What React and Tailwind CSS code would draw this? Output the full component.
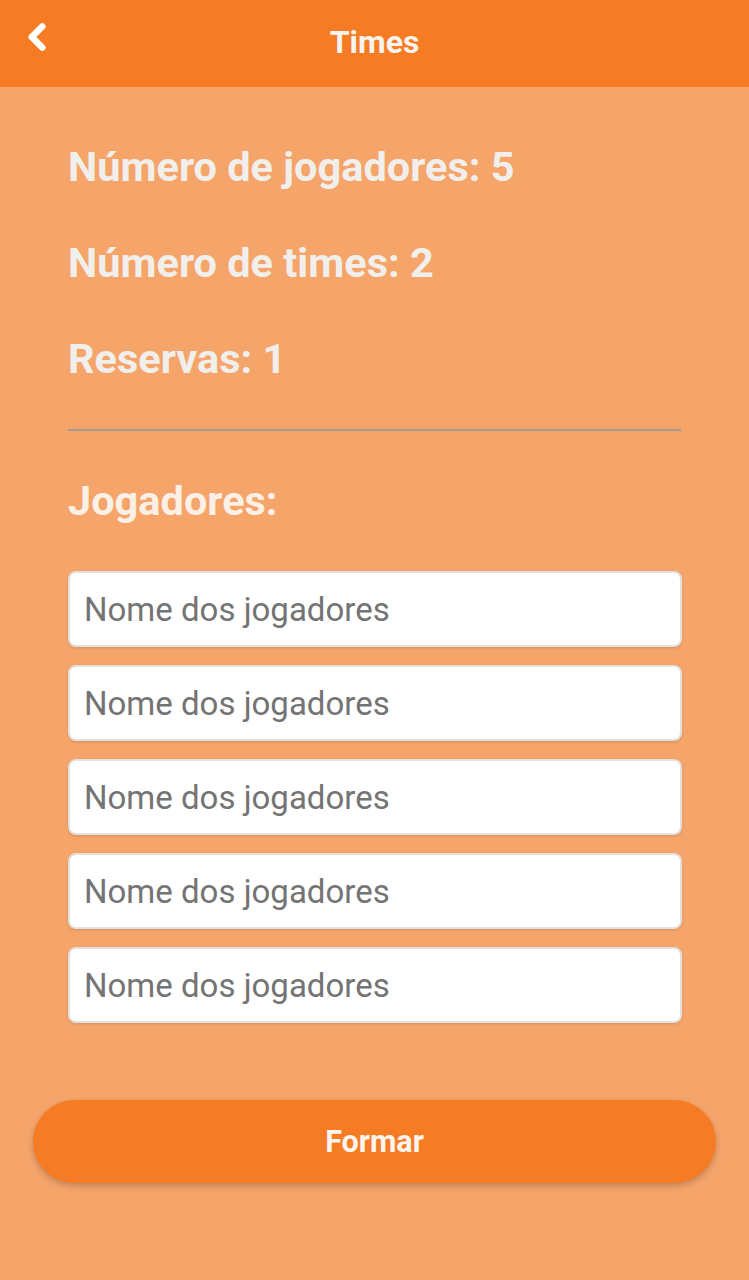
import { ChevronLeft } from "lucide-react";

const fields = [0, 1, 2, 3, 4];

export default function App() {
  return (
    <div className="min-h-[1280px] bg-[#f5a46a] font-['Roboto',sans-serif]">
      {/* Top bar */}
      <div className="relative flex h-[87px] items-center justify-center bg-[#f57b24] pb-[4px]">
        <button className="absolute left-[16px] top-[16px] text-white">
          <ChevronLeft className="h-[42px] w-[42px]" strokeWidth={3.8} />
        </button>
        <h1 className="text-[32px] font-bold text-[#f7f3ee]">Times</h1>
      </div>

      <div className="px-[68px] pt-[58px]">
        <p className="text-[41.5px] font-bold leading-[44px] text-[#f1efec]">Número de jogadores: 5</p>
        <p className="mt-[52px] text-[41.5px] font-bold leading-[44px] text-[#f1efec]">Número de times: 2</p>
        <p className="mt-[52px] text-[41.5px] font-bold leading-[44px] text-[#f1efec]">Reservas: 1</p>

        <div className="mt-[48px] h-[2px] w-[613px] bg-[#a39a92]" />

        <p className="mt-[48px] text-[41.5px] font-bold leading-[44px] text-[#faf0e6]">Jogadores:</p>

        <div className="mt-[48px] flex w-[614px] flex-col gap-[18px]">
          {fields.map((i) => (
            <input
              key={i}
              type="text"
              placeholder="Nome dos jogadores"
              className="h-[76px] w-full rounded-[8px] border-2 border-[#e3e1df] bg-white px-[14px] text-[33px] text-[#444] shadow-sm outline-none placeholder:text-[#747474]"
            />
          ))}
        </div>
      </div>

      <div className="px-[33px] pt-[77px]">
        <button className="h-[83px] w-full rounded-full bg-[#f57b24] text-[30.5px] font-bold text-[#fbf5ee] shadow-[0_3px_6px_rgba(0,0,0,0.2)]">
          Formar
        </button>
      </div>
    </div>
  );
}
